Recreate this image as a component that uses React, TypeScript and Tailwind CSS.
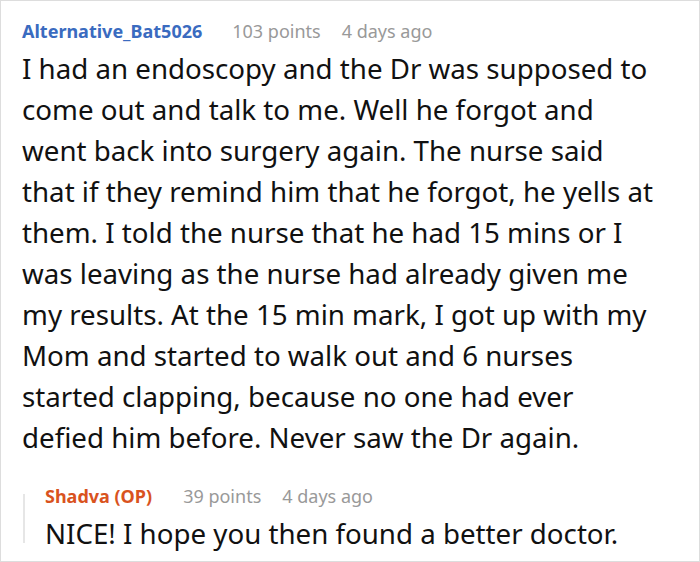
import React from "react";

const lines = [
  "I had an endoscopy and the Dr was supposed to",
  "come out and talk to me. Well he forgot and",
  "went back into surgery again. The nurse said",
  "that if they remind him that he forgot, he yells at",
  "them. I told the nurse that he had 15 mins or I",
  "was leaving as the nurse had already given me",
  "my results. At the 15 min mark, I got up with my",
  "Mom and started to walk out and 6 nurses",
  "started clapping, because no one had ever",
  "defied him before. Never saw the Dr again.",
];

export default function App() {
  return (
    <div
      className="w-[700px] h-[562px] border border-[#dddddd] bg-white overflow-hidden"
      style={{ fontFamily: '"Noto Sans", "Open Sans", sans-serif' }}
    >
      <div className="pl-[21px] pr-4 pt-[17px]">
        <div className="flex items-center h-[26px] text-[18px] leading-[26px]">
          <span className="font-bold text-[#3a6bc0]">Alternative_Bat5026</span>
          <span className="ml-[30px] text-[#999999]">103 points</span>
          <span className="ml-[21px] text-[#999999]">4 days ago</span>
        </div>
        <p className="text-[27.7px] leading-[41px] text-[#111111] mt-[3.5px]">
          {lines.map((l, i) => (
            <span key={i} className="block whitespace-nowrap">
              {l}
            </span>
          ))}
        </p>
        <div className="mt-[25.5px] flex">
          <div className="w-[2px] bg-[#e6e6e6] h-[49px] mt-[11px] ml-[1px]" />
          <div className="ml-[20px]">
            <div className="flex items-center h-[26px] text-[18px] leading-[26px]">
              <span className="font-bold text-[#d9531e]">Shadva (OP)</span>
              <span className="ml-[31px] text-[#999999]">39 points</span>
              <span className="ml-[21px] text-[#999999]">4 days ago</span>
            </div>
            <p className="text-[27.7px] leading-[41px] text-[#111111] mt-[3.5px] whitespace-nowrap">
              NICE! I hope you then found a better doctor.
            </p>
          </div>
        </div>
      </div>
    </div>
  );
}
